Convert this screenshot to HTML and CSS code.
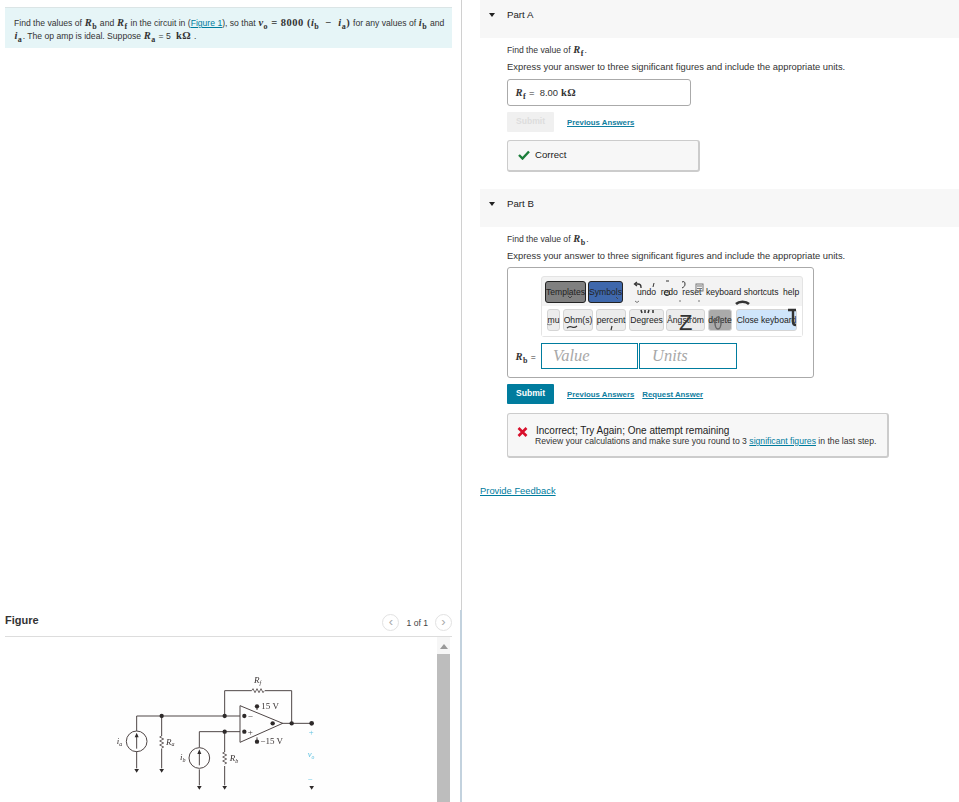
FILE: index.html
```html
<!DOCTYPE html>
<html lang="en">
<head>
  <meta charset="UTF-8" />
  <title>Op amp circuit problem</title>
  <link rel="stylesheet" href="styles.css">
</head>
<body>
  <div class="left">
    <div class="intro">
      Find the values of <b class="m"><i>R</i><sub>b</sub></b> and <b class="m"><i>R</i><sub>f</sub></b> in the circuit in (<a href="#">Figure 1</a>), so that <b class="m"><i>v</i><sub>o</sub> = 8000 (<i>i</i><sub>b</sub> &nbsp;− &nbsp;<i>i</i><sub>a</sub>)</b> for any values of <b class="m"><i>i</i><sub>b</sub></b> and<br>
      <b class="m"><i>i</i><sub>a</sub></b>. The op amp is ideal. Suppose <b class="m"><i>R</i><sub>a</sub></b> = 5 &nbsp;<b class="m">kΩ</b> .
    </div>
    <div class="figure-head">
      <span class="figure-title">Figure</span>
      <div class="pager">
        <span class="pager-btn">‹</span>
        <span class="pager-text">1 of 1</span>
        <span class="pager-btn">›</span>
      </div>
    </div>
    <div class="figure-body">
      <svg class="circuit" viewBox="0 0 720 426" width="240" height="142">
        <g fill="none" stroke="#4f4646" stroke-width="3">
          <path d="M110 213V168H420M185 168V228M185 266V325M110 274V325"/>
          <path d="M298 262V215H420M374 215V276M374 318V376M298 328V376"/>
          <path d="M374 168V92H455M495 92H575V190M545 190H635"/>
          <path d="M420 137V247L548 190Z"/>
          <path d="M471 137V150M471 232V245"/>
          <path d="M455 92l4-6 6 12 6-12 6 12 6-12 6 12 4-6" stroke-width="2.5"/>
          <path d="M185 228l-6 3 12 6-12 6 12 6-12 6 12 6-6 3" stroke-width="2.5"/>
          <path d="M374 276l-6 3 12 6-12 6 12 6-12 6 12 6-6 3" stroke-width="2.5"/>
          <circle cx="110" cy="244" r="31"/>
          <circle cx="298" cy="294" r="31"/>
          <path d="M110 266V228M298 316V278"/>
        </g>
        <g fill="#2e2a2a">
          <circle cx="185" cy="168" r="6.5"/><circle cx="374" cy="168" r="6.5"/>
          <circle cx="433" cy="168" r="6.5"/><circle cx="374" cy="215" r="6.5"/>
          <circle cx="433" cy="215" r="6.5"/><circle cx="518" cy="190" r="6.5"/>
          <circle cx="575" cy="190" r="6.5"/><circle cx="635" cy="190" r="7"/>
          <circle cx="471" cy="139" r="6.5"/><circle cx="471" cy="245" r="6.5"/>
          <path d="M110 218l-6 14h12ZM298 268l-6 14h12Z"/>
          <path d="M103 327h14l-7 11ZM178 327h14l-7 11ZM291 378h14l-7 11ZM367 378h14l-7 11ZM628 378h14l-7 11Z"/>
        </g>
        <g class="circuit-label">
          <text x="462" y="70" font-style="italic">R<tspan font-size="18" dy="5">f</tspan></text>
          <text x="484" y="148">15 V</text>
          <text x="481" y="252">−15 V</text>
          <text x="443" y="176">−</text>
          <text x="443" y="224">+</text>
          <text x="50" y="252" font-style="italic">i<tspan font-size="18" dy="5">a</tspan></text>
          <text x="198" y="254" font-style="italic">R<tspan font-size="18" dy="5">a</tspan></text>
          <text x="240" y="300" font-style="italic">i<tspan font-size="18" dy="5">b</tspan></text>
          <text x="389" y="304" font-style="italic">R<tspan font-size="18" dy="5">b</tspan></text>
        </g>
        <g class="circuit-out">
          <text x="626" y="224">+</text>
          <text x="623" y="292" font-style="italic">v<tspan font-size="17" dy="4">o</tspan></text>
          <text x="624" y="366">−</text>
        </g>
      </svg>
      <div class="scrollbar">
        <span class="scroll-up"></span>
        <span class="scroll-thumb"></span>
      </div>
    </div>
    <span class="split-strip"></span>
  </div>

  <div class="right">
    <div class="part-bar"><span class="caret"></span>Part A</div>
    <div class="part-body">
      <p class="q first">Find the value of <b class="m"><i>R</i><sub>f</sub></b>.</p>
      <p class="q q-wide">Express your answer to three significant figures and include the appropriate units.</p>
      <div class="answer-box"><b class="m"><i>R</i><sub>f</sub></b> = &nbsp;8.00 <b class="m">kΩ</b></div>
      <div class="actions">
        <span class="btn btn-off">Submit</span>
        <a href="#" class="small-link">Previous Answers</a>
      </div>
      <div class="feedback feedback-ok">
        <svg width="12" height="10" viewBox="0 0 12 10"><path d="M1 5l3.5 3.5L11 1.5" fill="none" stroke="#1b7d3a" stroke-width="2.4"/></svg>
        <span>Correct</span>
      </div>
    </div>

    <div class="part-bar part-b"><span class="caret"></span>Part B</div>
    <div class="part-body">
      <p class="q first">Find the value of <b class="m"><i>R</i><sub>b</sub></b>.</p>
      <p class="q q-wide">Express your answer to three significant figures and include the appropriate units.</p>
      <div class="editor">
        <div class="keyboard">
          <div class="kb-row">
            <span class="kb-btn kb-grey">Templates</span>
            <span class="kb-btn kb-blue">Symbols</span>
            <span class="kb-tools">
              <span>undo</span><span>redo</span><span>reset</span><span>keyboard shortcuts</span><span>help</span>
            </span>
          </div>
          <div class="kb-row kb-row-white">
            <span class="kb-key kb-mu">mu</span>
            <span class="kb-key kb-ohm">Ohm(s)</span>
            <span class="kb-key kb-pct">percent</span>
            <span class="kb-key kb-deg">Degrees</span>
            <span class="kb-key kb-ang">Ångström<i class="big-glyph">Z</i></span>
            <span class="kb-key kb-del">delete</span>
            <span class="kb-key kb-close">Close keyboard</span>
          </div>
          <!-- icon font glyphs that fell out of place -->
          <svg class="kb-stray" viewBox="0 0 262 61" width="262" height="61">
            <g fill="none" stroke="#333" stroke-width="1">
              <path d="M94 8h3c2 0 3 1 3 3v1" stroke-width="1.3"/>
              <path d="M96 6l-2.500 2 2.500 2" stroke-width="1.3"/>
              <path d="M112 11l1-4M125 5h3M141 6c2-1 3 0 3 2s-1 3-3 4" stroke-width="1"/>
              <circle cx="126" cy="17" r="2.6"/>
              <rect x="155" y="8" width="7" height="7" stroke="#777"/>
              <path d="M156 10h5M156 12.500h5" stroke="#777"/>
              <path d="M94 25l2 1.500 2-1.500M139 24v2M158 24v2" stroke="#777"/>
              <path d="M195 28c3-3 10-3 13 0" stroke-width="2.5"/>
              <path d="M100 34l1 3M104 34v3M108 34l-1 3M112 34v3" stroke-width="1.5"/>
              <path d="M26 52c2-2 3-2 5-1s3 1 5-1" stroke-width="1.2"/>
              <path d="M71 50l-1 4" stroke-width="1.2"/>
              <path d="M27 20l2 2 2-2M75 21l2 2" stroke="#444"/>
              <ellipse cx="177" cy="47" rx="3" ry="6" stroke="#666" stroke-width="1.5"/>
              <path d="M247 34h8M252 34v12c0 2 1 3 3 3" stroke-width="2.4"/>
              <path d="M6 48c2 1 3 1 5 0" stroke="#777"/>
            </g>
          </svg>
        </div>
        <div class="entry">
          <span class="entry-label"><b class="m"><i>R</i><sub>b</sub></b> =</span>
          <span class="entry-input entry-value">Value</span>
          <span class="entry-input entry-units">Units</span>
        </div>
      </div>
      <div class="actions actions-b">
        <span class="btn">Submit</span>
        <a href="#" class="small-link">Previous Answers</a>
        <a href="#" class="small-link link-req">Request Answer</a>
      </div>
      <div class="feedback feedback-bad">
        <svg width="11" height="10" viewBox="0 0 11 10"><path d="M1.500 1l8 8M9.500 1l-8 8" fill="none" stroke="#d8102c" stroke-width="2.6"/></svg>
        <div>
          <div class="fb-title">Incorrect; Try Again; One attempt remaining</div>
          <div class="fb-text">Review your calculations and make sure you round to 3 <a href="#">significant figures</a> in the last step.</div>
        </div>
      </div>
    </div>
    <a href="#" class="provide">Provide Feedback</a>
  </div>
</body>
</html>
```

FILE: styles.css
```css
body {
  margin: 0;
  height: 802px;
  overflow: hidden;
  display: flex;
  font-family: "Liberation Sans", Arial, sans-serif;
  color: #333;
  background: white;
}
a {
  color: #007c9e;
}
.m {
  font-family: "Liberation Serif", serif;
  font-weight: bold;
  font-size: 10.5px;
  letter-spacing: 0.5px;
  margin: 0 0.4px;
  color: #333;
}
.m sub {
  font-size: 8px;
  line-height: 0;
}

.left {
  width: 462px;
  height: 802px;
  flex: none;
  box-sizing: border-box;
  border-right: 1px solid #d0d0d0;
  padding: 7px 9px 0 5px;
  display: flex;
  flex-direction: column;
  position: relative;
}
.split-strip {
  position: absolute;
  right: -1px;
  top: 610px;
  bottom: 0;
  width: 2px;
  background: #c3d2de;
}
.intro {
  height: 41px;
  box-sizing: border-box;
  background: #e6f5f7;
  border-top: 1px solid #dbe5e6;
  padding: 9px 9px 0;
  font-size: 8.6px;
  line-height: 11.5px;
  white-space: nowrap;
}
.figure-head {
  margin-top: 561px;
  height: 27px;
  flex: none;
  border-bottom: 1px solid #ddd;
  display: flex;
  justify-content: space-between;
  align-items: flex-start;
}
.figure-title {
  font-size: 11px;
  font-weight: bold;
  line-height: 22px;
}
.pager {
  display: flex;
  align-items: center;
  gap: 7px;
  margin-top: 5px;
}
.pager-text {
  font-size: 8.6px;
  color: #444;
}
.pager-btn {
  width: 15px;
  height: 15px;
  border: 1px solid #e2e2e2;
  border-radius: 50%;
  color: #aaa;
  font-size: 13px;
  line-height: 13px;
  text-align: center;
}
.figure-body {
  flex: 1;
  display: flex;
  justify-content: space-between;
  overflow: hidden;
}
.circuit {
  margin: 23px 0 0 95px;
  background: #fefefe;
  filter: blur(0.3px);
}
.circuit-label text {
  font-family: "Liberation Serif", serif;
  font-size: 27px;
  fill: #3a3434;
}
.circuit-out text {
  font-family: "Liberation Serif", serif;
  font-size: 26px;
  fill: #5cc0e0;
}
.scrollbar {
  width: 13px;
  margin-right: 2px;
  background: #f6f6f6;
  display: flex;
  flex-direction: column;
  align-items: center;
}
.scroll-up {
  margin-top: 7px;
  border: 4px solid transparent;
  border-top: 0;
  border-bottom: 5px solid #999;
}
.scroll-thumb {
  width: 13px;
  flex: 1;
  margin-top: 5px;
  background: #bdbdbd;
}

.right {
  flex: 1;
  padding-left: 18px;
  font-size: 8.6px;
}
.part-bar {
  height: 38px;
  box-sizing: border-box;
  background: #f7f7f7;
  padding: 10px 0 0 9px;
  font-size: 9.700px;
  color: #222;
  display: flex;
  align-items: flex-start;
  line-height: 10px;
}
.part-b {
  margin-top: 17px;
}
.caret {
  width: 0;
  height: 0;
  margin: 3px 12px 0 0;
  border: 3.5px solid transparent;
  border-bottom: 0;
  border-top: 4px solid #222;
}
.part-body {
  padding-left: 27px;
}
.q {
  margin: 7px 0 0;
  font-size: 8.6px;
  line-height: 10px;
}
.q-wide {
  font-size: 9.4px;
}
.q.first {
  height: 10px;
}
.answer-box {
  width: 184px;
  height: 27px;
  box-sizing: border-box;
  margin-top: 7px;
  border: 1px solid #aaa;
  border-radius: 3px;
  padding: 0 7px;
  font-size: 9.400px;
  line-height: 25px;
}
.actions {
  display: flex;
  align-items: center;
  margin-top: 6px;
  height: 20px;
}
.btn {
  width: 47px;
  height: 20px;
  border-radius: 1px;
  background: #007c9e;
  color: white;
  font-weight: bold;
  text-align: center;
  line-height: 18px;
  margin-right: 13px;
}
.btn-off {
  background: #f0f0f0;
  color: #ddd;
}
.small-link {
  font-size: 7.800px;
  font-weight: bold;
  color: #0f7ea0;
}
.link-req {
  margin-left: 8px;
}
.feedback {
  box-sizing: border-box;
  border: 1px solid #ccc;
  border-bottom-width: 2px;
  border-right-width: 2px;
  border-radius: 3px;
  background: #f7f7f7;
  display: flex;
}
.feedback-ok {
  width: 193px;
  height: 32px;
  margin-top: 8px;
  padding: 0 0 2px 10px;
  align-items: center;
  gap: 5px;
  font-size: 9.600px;
  color: #222;
}
.feedback-bad {
  width: 382px;
  height: 45px;
  margin-top: 9px;
  padding: 11px 0 0 9px;
  gap: 8px;
  line-height: 11px;
}
.feedback-bad svg {
  margin-top: 2px;
}
.fb-title {
  font-size: 10px;
  color: #222;
}
.fb-text {
  margin-left: -1px;
  font-size: 8.650px;
}
.editor {
  width: 307px;
  height: 111px;
  box-sizing: border-box;
  margin-top: 6px;
  border: 1px solid #aaa;
  border-radius: 3px;
  padding: 8px 0 0 33px;
}
.keyboard {
  width: 262px;
  height: 61px;
  box-sizing: border-box;
  border: 1px solid #e4e4e4;
  border-radius: 3px;
  background: #f3f3f3;
  color: #222;
  font-size: 8.6px;
  position: relative;
}
.kb-stray {
  position: absolute;
  left: -1px;
  top: -1px;
  pointer-events: none;
}
.kb-row {
  height: 29px;
  display: flex;
  align-items: center;
  padding-left: 3px;
  gap: 2px;
}
.kb-row-white {
  height: 30px;
  background: white;
  align-items: flex-start;
  padding: 3px 0 0 5px;
  box-sizing: border-box;
  gap: 3px;
}
.kb-btn {
  height: 22px;
  box-sizing: border-box;
  border: 1px solid #222;
  border-radius: 3px;
  display: flex;
  align-items: center;
  justify-content: center;
  white-space: nowrap;
}
.kb-grey {
  width: 41px;
  background: #808080;
}
.kb-blue {
  width: 35px;
  background: #3f68ac;
}
.kb-tools {
  margin-left: 12px;
  display: flex;
  gap: 4.500px;
  white-space: nowrap;
}
.kb-key {
  height: 22px;
  box-sizing: border-box;
  border: 1px solid #d5d5d5;
  border-radius: 3px;
  background: #ececec;
  display: flex;
  align-items: center;
  justify-content: center;
  white-space: nowrap;
  position: relative;
}
.kb-mu { width: 13px; }
.kb-ohm { width: 30px; }
.kb-pct { width: 30px; }
.kb-deg { width: 35px; }
.kb-ang { width: 39px; margin-left: -1px; }
.kb-del { width: 24px; background: #aaa; }
.kb-close { width: 61px; margin-left: 1px; background: #cfe5fb; }
.big-glyph {
  position: absolute;
  left: 12px;
  top: 2px;
  font-style: normal;
  font-size: 22px;
  line-height: 22px;
  color: #333;
}
.entry {
  display: flex;
  align-items: center;
  margin-top: 6px;
}
.entry-label {
  margin-left: -26px;
  width: 26px;
  flex: none;
}
.entry-input {
  box-sizing: border-box;
  height: 26px;
  border: 1px solid #007c9e;
  font-family: "Liberation Serif", serif;
  font-style: italic;
  font-size: 16.500px;
  line-height: 24px;
  color: #a8a8a8;
}
.entry-value {
  width: 97px;
  padding-left: 11px;
}
.entry-units {
  width: 98px;
  margin-left: 1px;
  padding-left: 12px;
}
.actions-b {
  margin-top: 6px;
}
.provide {
  display: block;
  margin-top: 27px;
  font-size: 9.400px;
}
```
